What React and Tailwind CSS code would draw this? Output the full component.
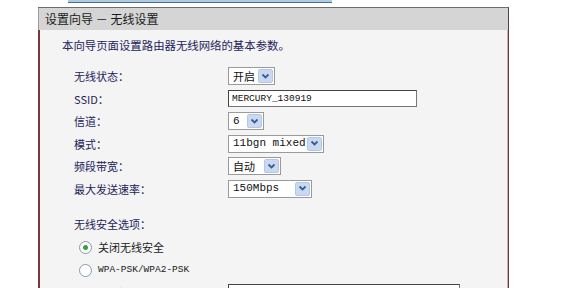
import React from "react";

const cjk = { fontFamily: '"Noto Sans CJK SC", "Noto Sans", sans-serif' };
const mono = { fontFamily: '"Liberation Mono", "Noto Sans CJK SC", monospace' };

function Arrow() {
  return (
    <div className="w-[15px] h-[14px] bg-[#c9d9f1] border border-[#b4c8e6] rounded-[2px] flex items-center justify-center">
      <svg width="9" height="7" viewBox="0 0 9 7">
        <path d="M1.5 1.5 L4.5 4.5 L7.5 1.5" fill="none" stroke="#3f5a8c" strokeWidth="1.8" />
      </svg>
    </div>
  );
}

function Select({ value, w, mono: isMono }) {
  return (
    <div
      className={`${w} h-[18px] bg-white border border-[#9a9a9a] flex items-center justify-between pl-[4px] pr-[1px] text-[#111]`}
    >
      <span
        className="text-[11px] leading-none"
        style={isMono ? { fontFamily: '"Liberation Mono", monospace' } : cjk}
      >
        {value}
      </span>
      <Arrow />
    </div>
  );
}

function Row({ label, children }) {
  return (
    <div className="flex items-center h-[22.5px]">
      <div className="w-[154px] text-[11px] text-[#23235a]" style={cjk}>
        {label}
      </div>
      {children}
    </div>
  );
}

function Radio({ checked, children, isMono }) {
  return (
    <div className="flex items-center h-[23px] pl-[39px]">
      <div className="w-[13px] h-[13px] rounded-full border border-[#8a99ad] bg-white flex items-center justify-center">
        {checked && <div className="w-[5px] h-[5px] rounded-full bg-[#3a9a4a]" />}
      </div>
      <span
        className={isMono ? "ml-[6px] text-[9.5px] text-[#222]" : "ml-[6px] text-[11px] text-[#222]"}
        style={isMono ? mono : cjk}
      >
        {children}
      </span>
    </div>
  );
}

export default function App() {
  return (
    <div className="w-[562px] h-[288px] overflow-hidden bg-white" style={cjk}>
      <div className="ml-[68px] w-[264px] h-[3px] bg-[#a8cde6] border-b border-[#5a6a7a]" />
      <div className="ml-[38px] mt-[4px] w-[471px] border-t border-[#6d6d6d] border-r border-r-[#5a4040]">
        <div className="h-[22px] bg-[#d5d5d5] border-l border-[#9a9a9a] flex items-center pl-[6px] text-[12px] text-[#1a1a1a]">
          设置向导 － 无线设置
        </div>
        <div className="h-[260px] bg-[#f4f4f4] border-l-2 border-[#7e3535] border-r border-r-[#d9a8a0]">
          <div className="pt-[7px] pl-[22px] h-[16px] box-content text-[11.4px] leading-[16px] text-[#23235a]">
            本向导页面设置路由器无线网络的基本参数。
          </div>
          <div className="mt-[12px] pl-[34px]">
            <Row label="无线状态：">
              <Select value="开启" w="w-[47px]" />
            </Row>
            <Row label="SSID：">
              <div className="w-[189px] h-[17px] bg-white border border-[#777] border-t-[#444] border-l-[#444] flex items-center pl-[3px]">
                <span className="text-[9.5px] text-[#111] leading-none" style={mono}>
                  MERCURY_130919
                </span>
              </div>
            </Row>
            <Row label="信道：">
              <Select value="6" w="w-[36px]" mono />
            </Row>
            <Row label="模式：">
              <Select value="11bgn mixed" w="w-[96px]" mono />
            </Row>
            <Row label="频段带宽：">
              <Select value="自动" w="w-[53px]" />
            </Row>
            <Row label="最大发送速率：">
              <Select value="150Mbps" w="w-[84px]" mono />
            </Row>
          </div>
          <div className="mt-[14px] pl-[34px] h-[20px] flex items-center text-[11px] text-[#23235a]">
            无线安全选项：
          </div>
          <div className="mt-[2px]">
            <Radio checked>关闭无线安全</Radio>
            <Radio isMono>WPA-PSK/WPA2-PSK</Radio>
            <div className="flex items-start h-[23px] pl-[55px]">
              <div className="w-[133px] pt-[6px] text-[11px] text-[#23235a] leading-none">PSK密码：</div>
              <div className="mt-[2px] w-[232px] h-[17px] bg-white border border-[#777] border-t-[#444] border-l-[#444]" />
            </div>
          </div>
        </div>
      </div>
    </div>
  );
}
